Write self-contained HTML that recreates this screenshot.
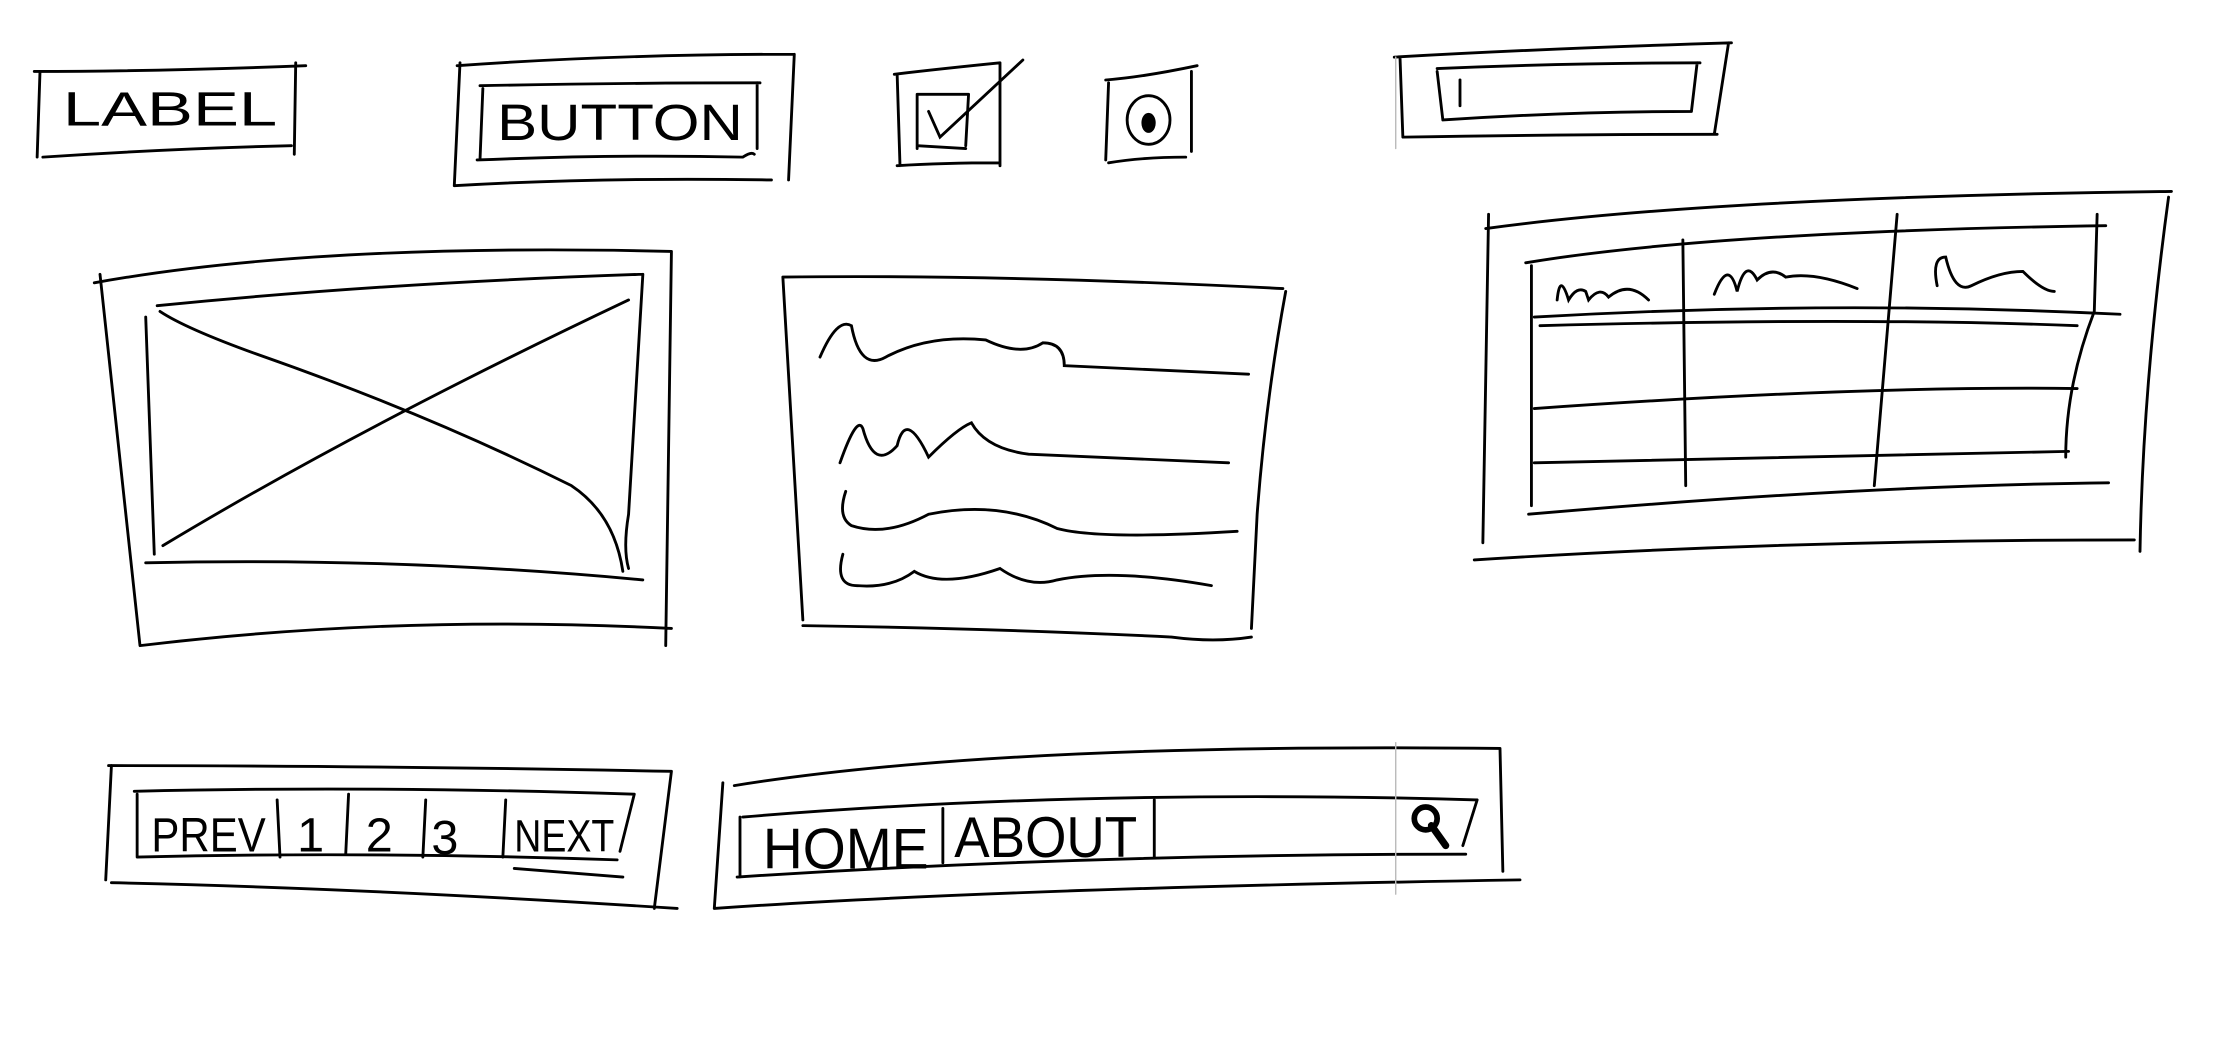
<!DOCTYPE html>
<html><head><meta charset="utf-8"><style>
html,body{margin:0;padding:0;background:#fff;width:2230px;height:1057px;overflow:hidden}
svg{display:block}
text{font-family:"Liberation Sans",sans-serif;fill:#000}
</style></head><body>
<svg width="2230" height="1057" viewBox="0 0 1561 740" preserveAspectRatio="none" fill="none" stroke="#000" stroke-width="2" stroke-linecap="round">
<!-- LABEL -->
<path d="M28 50 L26 110 M24 50 Q110 50 214 46 M30 110 Q120 104 204 102 M207 44 L206 108"/>
<text x="44" y="88" font-size="34" stroke="none" textLength="150" lengthAdjust="spacingAndGlyphs" font-weight="normal">LABEL</text>
<!-- BUTTON -->
<path d="M322 44 L318 130 M320 46 Q430 38 556 38 M556 38 L552 126 M318 130 Q420 124 540 126"/>
<path d="M338 62 L336 112 M336 60 Q430 58 532 58 M530 58 L530 104 M334 112 Q430 108 520 110 Q526 106 528 108"/>
<text x="348" y="98" font-size="36" stroke="none" textLength="172" lengthAdjust="spacingAndGlyphs">BUTTON</text>
<!-- checkbox -->
<path d="M628 52 L630 116 M626 52 Q660 48 700 44 M700 44 L700 116 M628 116 Q660 114 700 114"/>
<path d="M642 66 L642 104 M642 66 L678 66 M678 66 L676 102 M642 102 L676 104"/>
<path d="M650 78 L658 96 L716 42"/>
<!-- radio -->
<path d="M776 58 L774 112 M774 56 Q800 54 838 46 M834 50 L834 106 M776 114 Q800 110 830 110"/>
<ellipse cx="804" cy="84" rx="15" ry="17"/>
<ellipse cx="804" cy="86" rx="4" ry="6" fill="#000"/>
<!-- text input -->
<path d="M980 40 L982 96 M976 40 Q1080 34 1212 30 M1210 30 L1200 94 M982 96 Q1100 94 1202 94"/>
<path d="M1006 50 L1010 84 M1006 48 Q1100 44 1190 44 M1188 44 L1184 78 M1010 84 Q1100 78 1184 78"/>
<path d="M1022 56 L1022 74"/>
<path d="M977 40 L977 104" stroke="#bbb" stroke-width="1"/>
<!-- image -->
<path d="M66 198 Q220 170 470 176 M70 192 L98 452 M470 176 L466 452 M98 452 Q280 430 470 440"/>
<path d="M110 214 Q270 198 450 192 M450 192 L440 360 Q436 384 440 398 M102 222 L108 388 M102 394 Q280 390 450 406"/>
<path d="M112 218 Q130 230 180 248 Q300 290 400 340 Q430 360 436 400"/>
<path d="M114 382 Q250 300 440 210"/>
<!-- paragraph -->
<path d="M548 194 Q700 192 898 202 M548 194 L562 434 M900 204 Q886 280 880 360 L876 440 M562 438 Q700 440 820 446 Q850 450 876 446"/>
<path d="M574 250 Q586 222 596 228 Q602 260 620 250 Q650 234 690 238 Q715 250 730 240 Q745 240 745 256 L874 262"/>
<path d="M588 324 Q600 290 604 300 Q612 330 628 312 Q634 286 650 320 Q670 300 680 296 Q690 314 720 318 L860 324"/>
<path d="M592 344 Q586 362 596 368 Q620 376 650 360 Q700 350 740 370 Q770 378 866 372"/>
<path d="M590 388 Q584 410 600 410 Q624 412 640 400 Q660 412 700 398 Q720 412 740 406 Q780 398 848 410"/>
<!-- table -->
<path d="M1040 160 Q1200 138 1520 134 M1042 150 L1038 380 M1518 138 Q1500 270 1498 386 M1032 392 Q1250 378 1494 378"/>
<path d="M1068 184 Q1200 162 1474 158 M1072 186 L1072 354 M1070 360 Q1300 340 1476 338"/>
<path d="M1074 222 Q1280 210 1484 220 M1078 228 Q1300 222 1454 228 M1074 286 Q1300 270 1454 272 M1074 324 Q1300 320 1448 316"/>
<path d="M1178 168 L1180 340 M1328 150 Q1320 250 1312 340 M1468 150 L1466 218 Q1446 270 1446 320"/>
<path d="M1090 210 Q1092 190 1098 210 Q1104 200 1110 204 L1112 210 Q1120 200 1126 208 Q1140 196 1154 210"/>
<path d="M1200 206 Q1210 180 1216 204 Q1222 180 1230 196 Q1240 186 1250 194 Q1270 190 1300 202"/>
<path d="M1356 200 Q1352 180 1362 180 Q1368 206 1380 200 Q1400 190 1416 190 Q1430 204 1438 204"/>
<!-- pagination -->
<path d="M78 536 L74 616 M76 536 Q260 536 470 540 M470 540 L458 636 M78 618 Q260 622 474 636"/>
<path d="M96 556 L96 600 M94 554 Q260 550 444 556 M444 556 L434 596 M96 600 Q260 596 432 602 M360 608 L436 614"/>
<path d="M194 560 L196 600 M244 556 L242 598 M298 560 L296 600 M354 560 L352 600"/>
<text x="106" y="596" font-size="34" stroke="none" textLength="80" lengthAdjust="spacingAndGlyphs">PREV</text>
<text x="208" y="596" font-size="34" stroke="none">1</text>
<text x="256" y="596" font-size="34" stroke="none">2</text>
<text x="302" y="598" font-size="34" stroke="none">3</text>
<text x="360" y="596" font-size="32" stroke="none" textLength="70" lengthAdjust="spacingAndGlyphs">NEXT</text>
<!-- navbar -->
<path d="M506 548 L500 636 M514 550 Q700 520 1050 524 M1050 524 L1052 610 M500 636 Q700 622 1064 616"/>
<path d="M518 572 L518 614 M520 572 Q760 552 1034 560 M1034 560 L1024 592 M516 614 Q760 598 1026 598"/>
<path d="M660 566 L660 604 M808 560 L808 600"/>
<text x="534" y="608" font-size="40" stroke="none" textLength="116" lengthAdjust="spacingAndGlyphs">HOME</text>
<text x="668" y="600" font-size="40" stroke="none" textLength="128" lengthAdjust="spacingAndGlyphs">ABOUT</text>
<ellipse cx="998" cy="573" rx="8" ry="8" stroke-width="4"/>
<path d="M1002 578 L1012 592" stroke-width="5"/>
<path d="M977 520 L977 626" stroke="#bbb" stroke-width="1"/>
</svg>
</body></html>
